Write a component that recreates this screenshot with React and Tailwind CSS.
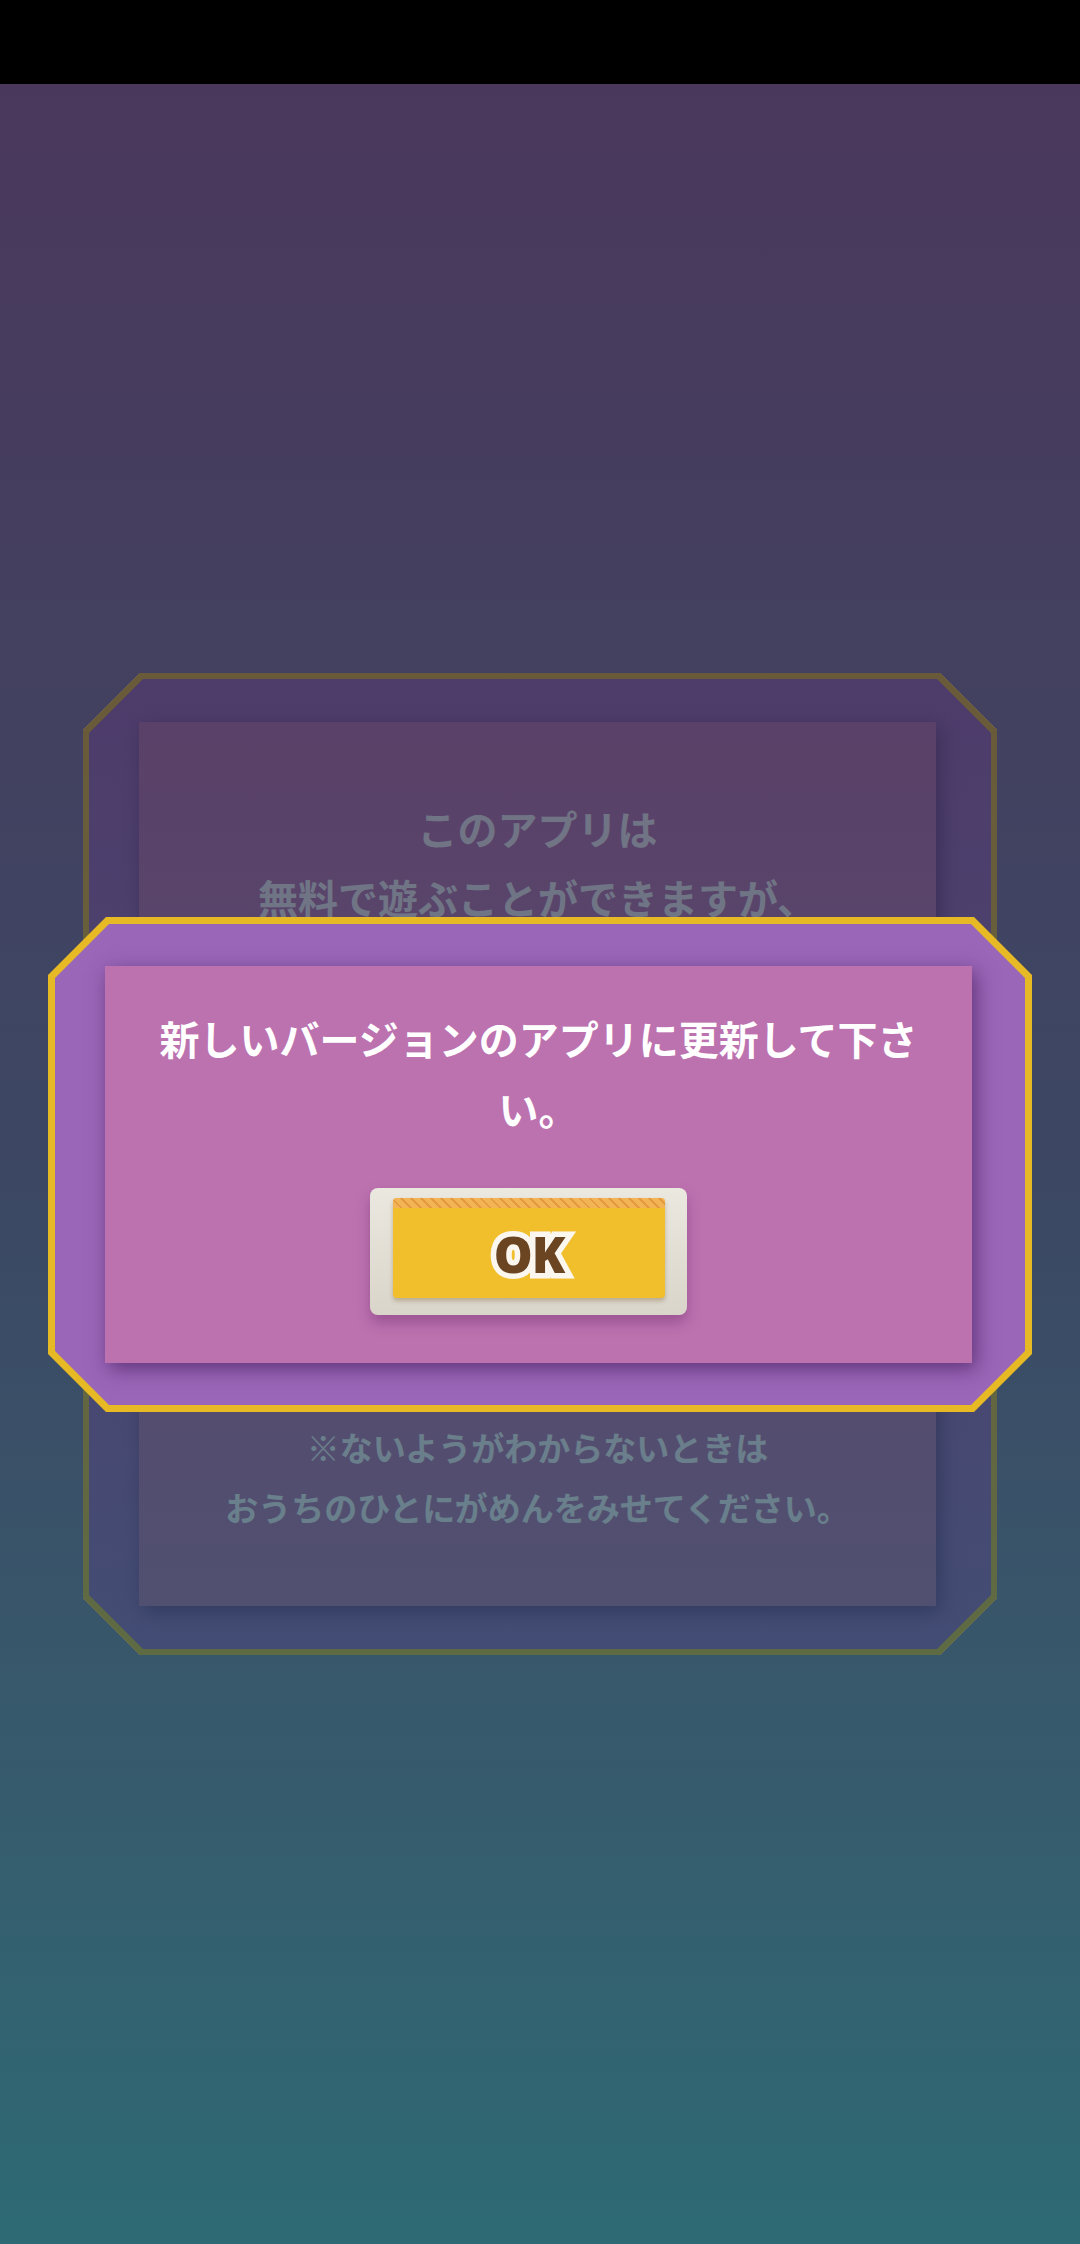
const FONT = "font-['Noto_Sans_CJK_JP','Noto_Sans',sans-serif]";

function BackPanel() {
  return (
    <div className="relative mt-[589px] w-[914px] h-[982px] bg-[#e8bc2a] p-[6px] [clip-path:polygon(57px_0,calc(100%_-_57px)_0,100%_57px,100%_calc(100%_-_57px),calc(100%_-_57px)_100%,57px_100%,0_calc(100%_-_57px),0_57px)]">
      <div className="h-full bg-[#9a66b8] pt-[43px] pl-[50px] pr-[55px] pb-[43px] [clip-path:polygon(54px_0,calc(100%_-_54px)_0,100%_54px,100%_calc(100%_-_54px),calc(100%_-_54px)_100%,54px_100%,0_calc(100%_-_54px),0_54px)]">
        <div className="h-full bg-[#bd72b0] shadow-[4px_6px_18px_rgba(60,20,80,0.6)] flex flex-col justify-between text-center text-white font-bold pt-[72px] pb-[69px]">
          <p className="text-[40px] leading-[69px]">
            このアプリは
            <br />
            無料で遊ぶことができますが、
          </p>
          <p className="text-[33px] leading-[60px]">
            ※ないようがわからないときは
            <br />
            おうちのひとにがめんをみせてください。
          </p>
        </div>
      </div>
      {/* dim layer behind the active dialog */}
      <div className="absolute inset-0 bg-gradient-to-b from-[rgba(37,37,65,0.65)] to-[rgba(20,63,80,0.65)]" />
    </div>
  );
}

function OkButton() {
  return (
    <div className="mr-[20px] w-[317px] h-[127px] rounded-[8px] bg-gradient-to-b from-[#ebe8e0] to-[#d9d5ca] pt-[10px] pl-[23px] pr-[22px] pb-[17px] shadow-[0_8px_14px_rgba(90,30,90,0.35)]">
      <div className="relative h-full rounded-[4px] bg-[#f1be2c] shadow-[0_3px_4px_rgba(120,90,40,0.35)] overflow-hidden flex items-center justify-center">
        <div className="absolute inset-x-0 top-0 h-[10px] bg-[repeating-linear-gradient(45deg,#f3b455_0_5px,#e59a3f_5px_7px)]" />
        <span className="mt-[12px] font-['Noto_Sans',sans-serif] font-black text-[49px] leading-none tracking-[-1px] text-[#6b4522] [-webkit-text-stroke:11px_#fbf7ef] [paint-order:stroke_fill]">
          OK
        </span>
      </div>
    </div>
  );
}

function UpdateDialog() {
  return (
    <div className="absolute inset-x-0 top-[833px] flex justify-center">
      <div className="w-[984px] h-[495px] bg-[#e6b925] p-[7px] [clip-path:polygon(58px_0,calc(100%_-_58px)_0,100%_58px,100%_calc(100%_-_58px),calc(100%_-_58px)_100%,58px_100%,0_calc(100%_-_58px),0_58px)]">
        <div className="h-full bg-[#9a66b8] pt-[42px] pl-[50px] pr-[53px] pb-[42px] [clip-path:polygon(54px_0,calc(100%_-_54px)_0,100%_54px,100%_calc(100%_-_54px),calc(100%_-_54px)_100%,54px_100%,0_calc(100%_-_54px),0_54px)]">
          <div className="h-full bg-[#bd72b0] shadow-[4px_6px_18px_rgba(60,20,80,0.6)] flex flex-col items-center pt-[37px] px-[40px]">
            <p className="text-center text-white font-bold text-[40px] leading-[70px]">
              新しいバージョンのアプリに更新して下さい。
            </p>
            <div className="mt-[45px]">
              <OkButton />
            </div>
          </div>
        </div>
      </div>
    </div>
  );
}

export default function App() {
  return (
    <div className={`w-[1080px] min-h-[2244px] flex flex-col ${FONT}`}>
      <div className="h-[84px] shrink-0 bg-black" />
      <main className="relative flex-1 flex flex-col items-center bg-gradient-to-b from-[#4a385c] via-[#3c4763] to-[#2d6a74]">
        <BackPanel />
        <UpdateDialog />
      </main>
    </div>
  );
}
